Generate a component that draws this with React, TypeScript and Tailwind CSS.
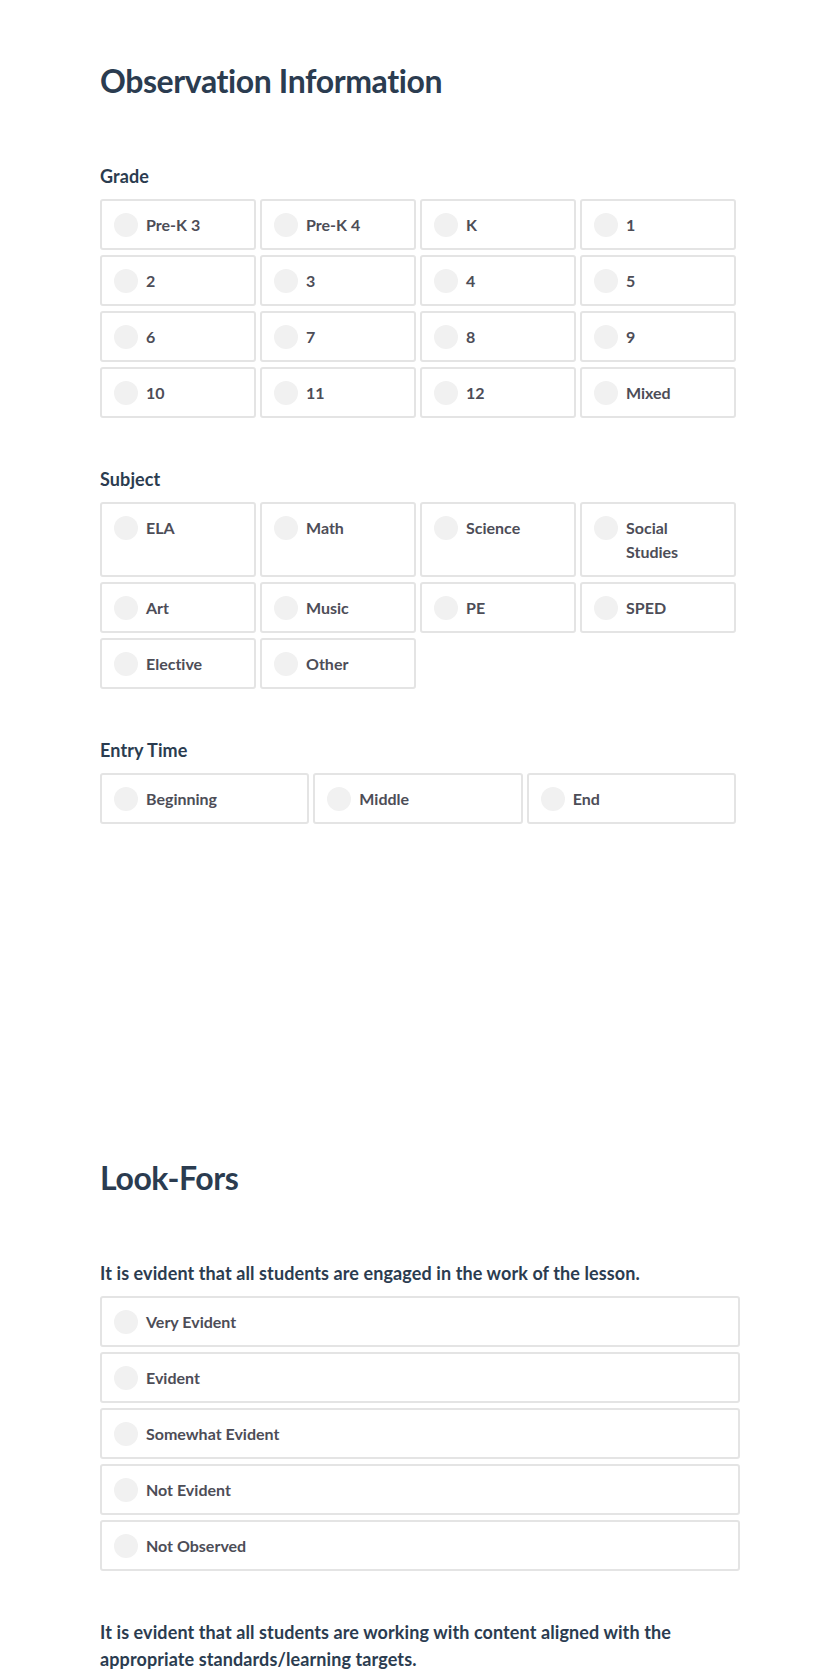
import React from "react";

const grades = ["Pre-K 3", "Pre-K 4", "K", "1", "2", "3", "4", "5", "6", "7", "8", "9", "10", "11", "12", "Mixed"];
const subjects = ["ELA", "Math", "Science", "Social Studies", "Art", "Music", "PE", "SPED", "Elective", "Other"];
const entryTimes = ["Beginning", "Middle", "End"];
const scale = ["Very Evident", "Evident", "Somewhat Evident", "Not Evident", "Not Observed"];

function Option({ label }: { label: string }) {
  return (
    <label className="flex items-start border-2 border-[#e4e4e4] rounded-[3px] pl-3 pr-4 py-[11.5px] bg-white cursor-pointer">
      <span className="w-6 h-6 rounded-full bg-[#f1f1f1] shrink-0 mr-2"></span>
      <span className="text-[16px] leading-6 font-bold text-[#4d4d57]">{label}</span>
    </label>
  );
}

function Question({ label, className, children }: { label: string; className?: string; children: React.ReactNode }) {
  return (
    <div className={className}>
      <h3 className="text-[18px] leading-[27px] font-bold tracking-[0.1px] text-[#2b3c50] mb-[9px]">{label}</h3>
      {children}
    </div>
  );
}

export default function App() {
  return (
    <div className="min-h-screen bg-white font-['Lato',sans-serif] [font-variant-ligatures:none] px-[100px]">
      <div className="w-[640px]">
        <h1 className="pt-[61px] text-[32px] leading-10 font-bold tracking-[-0.4px] text-[#2b3c50]">
          Observation Information
        </h1>

        <Question label="Grade" className="mt-[62px]">
          <div className="grid grid-cols-[repeat(4,156px)] gap-x-1 gap-y-[5px]">
            {grades.map((g) => (
              <Option key={g} label={g} />
            ))}
          </div>
        </Question>

        <Question label="Subject" className="mt-[48px]">
          <div className="grid grid-cols-[repeat(4,156px)] gap-x-1 gap-y-[5px]">
            {subjects.map((s) => (
              <Option key={s} label={s} />
            ))}
          </div>
        </Question>

        <Question label="Entry Time" className="mt-[48px]">
          <div className="grid grid-cols-[repeat(3,209.33px)] gap-x-1 gap-y-[5px]">
            {entryTimes.map((t) => (
              <Option key={t} label={t} />
            ))}
          </div>
        </Question>

        <h1 className="mt-[334px] text-[32px] leading-10 font-bold tracking-[-0.4px] text-[#2b3c50]">Look-Fors</h1>

        <Question label="It is evident that all students are engaged in the work of the lesson." className="mt-[62px]">
          <div className="flex flex-col gap-[5px]">
            {scale.map((s) => (
              <Option key={s} label={s} />
            ))}
          </div>
        </Question>

        <Question
          label="It is evident that all students are working with content aligned with the appropriate standards/learning targets."
          className="mt-[48px]"
        >
          <div className="flex flex-col gap-[5px]">
            {scale.map((s) => (
              <Option key={s + "2"} label={s} />
            ))}
          </div>
        </Question>
      </div>
    </div>
  );
}
